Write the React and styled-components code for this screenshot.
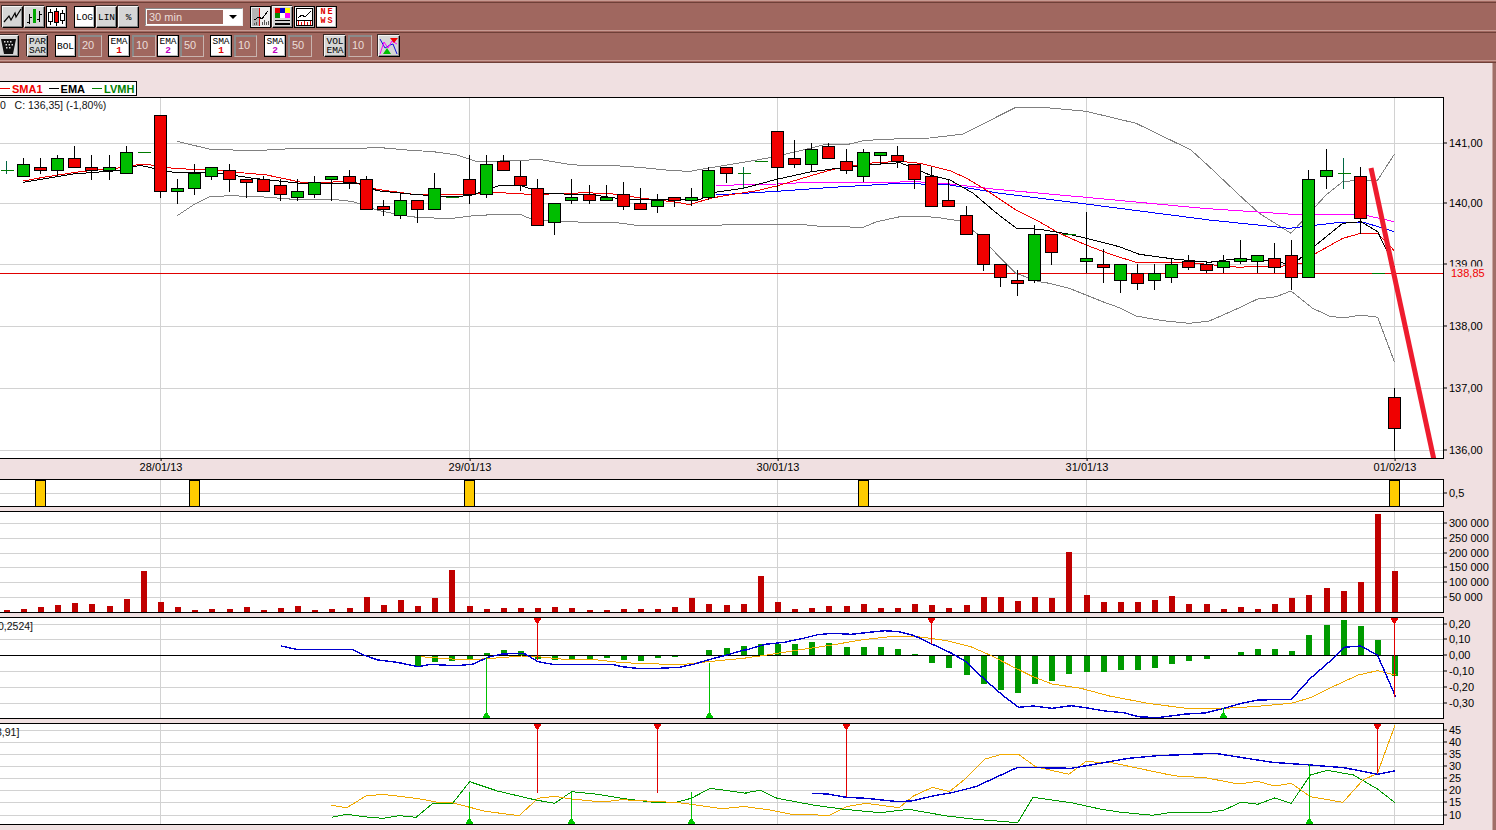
import React from "react";
import styled, { createGlobalStyle } from "styled-components";

const BROWN = "#a0675f";
const PINK = "#f0e0e1";
const GRID = "#d2d2d2";

const GlobalStyle = createGlobalStyle`
  html, body { margin: 0; padding: 0; background: ${PINK}; }
  body { font-family: "Liberation Sans", Arial, sans-serif; font-size: 11px; color: #000; }
`;

const Page = styled.div`
  width: 1496px;
  height: 830px;
  overflow: hidden;
  display: flex;
  flex-direction: column;
  background: ${PINK};
`;

/* toolbar */
const Toolbar = styled.header`
  flex: none;
  height: 63px;
  background: ${BROWN};
`;

const Stripe = styled.div`
  box-sizing: border-box;
  height: 3px;
  border-top: 1px solid #c79a92;
  border-bottom: 1px solid #6f4038;
`;

const ToolRow = styled.div`
  box-sizing: border-box;
  height: 27px;
  display: flex;
  align-items: flex-start;
  padding-top: ${(p) => p.$pad}px;
`;

const ToolButton = styled.div`
  box-sizing: border-box;
  flex: none;
  width: ${(p) => p.$w || 21}px;
  height: 22px;
  margin-left: ${(p) => p.$ml || 0}px;
  display: flex;
  flex-direction: column;
  align-items: center;
  justify-content: center;
  text-align: center;
  background: ${(p) => (p.$on ? "#fff" : "#d6d6d6")};
  border: 1px solid #000;
  border-top-color: ${(p) => (p.$on ? "#000" : "#f4f4f4")};
  border-left-color: ${(p) => (p.$on ? "#000" : "#f4f4f4")};
  box-shadow: ${(p) => (p.$on ? "inset -1px -1px 0 #bbb" : "inset -1px -1px 0 #888, -1px -1px 0 #3a2a28")};
  font: 9.5px/9px "Liberation Mono", "DejaVu Sans Mono", monospace;
  color: #000;
  svg { display: block; }
`;

const Num = styled.span`
  color: ${(p) => p.$c};
  font-weight: bold;
`;

const NewsText = styled.span`
  color: #e00000;
  font-weight: bold;
  letter-spacing: 2px;
  margin-right: -2px;
  font-size: 8.5px;
  line-height: 9px;
  text-align: center;
`;

const ValueBox = styled.div`
  box-sizing: border-box;
  flex: none;
  width: ${(p) => p.$w || 24}px;
  height: 22px;
  margin-left: ${(p) => p.$ml || 2}px;
  padding-left: 3px;
  background: ${BROWN};
  border: 1px solid #8a8a8a;
  border-right-color: #c9b3ae;
  border-bottom-color: #c9b3ae;
  box-shadow: inset 1px 1px 0 #8a8a8a;
  color: #eaddd8;
  font-size: 11px;
  line-height: 19px;
`;

const Select = styled.div`
  box-sizing: border-box;
  flex: none;
  width: 98px;
  height: 18px;
  margin: 2px 0 0 6px;
  display: flex;
  background: #fff;
  border: 1px solid #8a8a8a;
  border-right-color: #eee;
  border-bottom-color: #eee;
`;

const SelectValue = styled.div`
  flex: 1;
  margin: 1px 0 1px 1px;
  padding-left: 2px;
  background: ${BROWN};
  color: #eaddd8;
  font-size: 11px;
  line-height: 14px;
`;

const SelectArrow = styled.div`
  flex: none;
  width: 19px;
  display: flex;
  align-items: center;
  justify-content: center;
  &::after {
    content: "";
    border: 4px solid transparent;
    border-top: 4px solid #000;
    border-bottom: 0;
  }
`;

/* chart area */
const Body = styled.div`
  flex: 1;
  display: flex;
  min-height: 0;
`;

const Charts = styled.main`
  flex: 1;
  min-width: 0;
`;

const Edge = styled.div`
  flex: none;
  width: 3px;
  background: #a06f68;
  border-left: 1px solid #c9a6a1;
`;

const LegendRow = styled.div`
  height: 34px;
  display: flex;
  align-items: flex-start;
  padding-top: 18px;
  box-sizing: border-box;
`;

const Legend = styled.div`
  box-sizing: border-box;
  height: 15px;
  width: 138px;
  margin-left: -1px;
  display: flex;
  align-items: center;
  background: #fff;
  border: 1px solid #000;
`;

const LegendItem = styled.span`
  display: flex;
  align-items: center;
  gap: 2px;
  margin-left: ${(p) => p.$ml}px;
  color: ${(p) => p.$c};
  font-weight: bold;
  font-size: 11px;
  &::before {
    content: "";
    width: 10px;
    height: 1px;
    background: ${(p) => p.$c};
  }
`;

const PanelRow = styled.section`
  display: flex;
  height: ${(p) => p.$h}px;
  margin-top: ${(p) => p.$gap || 0}px;
`;

const Plot = styled.div`
  box-sizing: border-box;
  position: relative;
  flex: none;
  width: 1444px;
  height: 100%;
  background: #fff;
  border: 1px solid #000;
  border-left: 0;
  overflow: hidden;
  svg { display: block; }
`;

const PlotNote = styled.span`
  position: absolute;
  top: ${(p) => p.$top}px;
  left: ${(p) => p.$left}px;
  white-space: pre;
  font-size: 10.5px;
  line-height: 13px;
  color: #111;
`;

const Axis = styled.div`
  position: relative;
  flex: 1;
`;

const AxisLabel = styled.span`
  position: absolute;
  left: 5px;
  transform: translateY(-50%);
  white-space: nowrap;
  font-size: 11px;
  line-height: 13px;
  color: #000;
  &::before {
    content: "";
    position: absolute;
    left: -5px;
    top: 6px;
    width: 3px;
    height: 1px;
    background: #000;
  }
`;

const LastPrice = styled.span`
  position: absolute;
  left: 5px;
  transform: translateY(-50%);
  padding: 0 2px;
  background: ${PINK};
  color: #f00000;
  font-size: 11px;
  line-height: 13px;
`;

const DateRow = styled.div`
  position: relative;
  height: 20px;
`;

const DateLabel = styled.span`
  position: absolute;
  top: 2px;
  transform: translateX(-50%);
  font-size: 11px;
  line-height: 13px;
  &::before {
    content: "";
    position: absolute;
    left: 50%;
    top: -2px;
    width: 1px;
    height: 2px;
    background: #000;
  }
`;

/* market data, read off the chart in page pixels */
const barX = (i) => Math.round(5.75 + 17.14 * i);
const VERTICALS = [160, 469, 777, 1086, 1394];
const DATES = [[161, "28/01/13"], [470, "29/01/13"], [778, "30/01/13"], [1087, "31/01/13"], [1395, "01/02/13"]];

// type, body top, body bottom, wick top, wick bottom
const CANDLES = [
  ["d",170,170,161,174],["g",164,176,158,176],["r",167,170,158,174],["g",158,170,155,177],["r",158,167,146,167],
  ["r",167,170,155,180],["g",167,170,155,180],["g",152,173,146,173],["d",152,152,152,152],["r",115,191,115,198],
  ["g",188,191,179,204],["g",173,188,164,195],["g",167,176,167,180],["r",170,179,164,192],["r",179,182,179,198],
  ["r",179,191,176,191],["r",185,194,179,201],["g",191,197,179,201],["g",182,194,176,198],["g",176,179,176,201],
  ["r",176,182,170,189],["r",179,209,176,209],["r",206,209,200,216],["g",200,215,194,219],["r",200,209,200,223],
  ["g",188,209,173,209],["d",197,197,197,197],["r",179,194,155,204],["g",164,194,155,198],["r",161,170,155,170],
  ["r",176,185,161,191],["r",188,225,179,225],["g",203,222,203,235],["g",197,200,179,204],["r",194,200,185,204],
  ["g",197,200,185,200],["r",194,206,182,210],["r",203,209,188,209],["g",200,206,194,213],["r",197,200,197,207],
  ["g",197,200,188,206],["g",170,197,167,200],["r",167,173,167,183],["d",173,173,167,188],["d",161,161,161,161],
  ["r",131,167,131,191],["r",158,164,140,168],["g",149,164,143,171],["r",146,158,143,158],["r",161,170,149,174],
  ["g",152,176,149,182],["g",152,155,152,164],["r",155,161,146,168],["r",164,179,164,189],["r",176,206,167,206],
  ["r",200,206,179,206],["r",215,234,206,234],["r",234,264,234,271],["r",264,277,264,287],["r",280,283,270,296],
  ["g",234,280,225,283],["r",234,252,234,265],["d",234,234,234,234],["g",258,261,212,273],["r",264,267,249,283],
  ["g",264,280,264,293],["r",273,283,264,290],["g",273,280,264,290],["g",264,277,258,283],["r",261,267,255,270],
  ["r",264,270,261,273],["g",261,267,255,273],["g",258,261,240,264],["g",255,261,255,273],["r",258,267,243,273],
  ["r",255,277,240,290],["g",179,277,170,277],["g",170,176,149,189],["d",173,173,158,189],["r",176,218,167,234],
  ["d",273,273,273,273],["r",397,428,388,451],
];

const VOLUMES = [
  2,3,5,7,9,8,6,13,41,10,5,2,3,3,5,2,4,6,2,3,4,15,7,12,6,14,42,6,3,4,4,4,5,4,2,2,3,3,3,5,14,8,7,8,36,10,3,4,6,6,8,
  4,4,8,7,4,7,15,15,11,15,14,60,17,10,10,10,12,16,8,8,3,5,3,8,14,17,24,21,30,98,41,
];

// histogram height from the zero line: plus goes up, minus goes down; starts at bar 24
const HISTOGRAM = [
  -10,-6,-5,-4,2,5,4,-3,-4,-4,-4,-2,-4,-5,-2,-1,0,5,7,9,11,11,11,13,12,8,8,8,6,1,-7,-12,-19,-28,-34,-37,-28,-25,-18,-16,
  -16,-14,-14,-12,-8,-5,-3,0,3,6,6,4,20,30,35,29,15,-20,
];

// traced traces: coordinates of 3x crops, turned into page pixels here
const tr = (pts, ox, oy, sx = 3, sy = 3) => pts.map(([x, y]) => [ox + x / sx, oy + y / sy]);
const toPoints = (...parts) => parts.flat().map(([x, y]) => `${x.toFixed(1)},${y.toFixed(1)}`).join(" ");
const WIDE = 1568 / 750;

const BOLL_UP = toPoints(
  tr([[532,124],[630,148],[765,152],[870,146],[970,147],[1075,146],[1130,142],[1220,150],[1300,155],[1370,165],[1430,185],[1500,183]], 0, 100),
  tr([[60,182],[115,178],[200,192],[240,196],[330,196],[430,203],[520,212],[570,214],[620,205],[700,192],[760,182],[830,169],[930,145],[970,135],[1040,134],[1090,122],[1150,118],[1290,114],[1390,102],[1450,72],[1488,52]], 500, 100),
  tr([[60,22],[140,22],[270,34],[420,70],[585,150],[640,200],[740,295],[790,340],[885,400],[940,340],[990,285],[1040,245],[1095,240],[1145,240],[1195,163]], 996, 100),
);
const BOLL_DOWN = toPoints(
  tr([[532,347],[580,315],[630,290],[690,287],[780,290],[880,298],[1000,298],[1060,305],[1130,330],[1200,345],[1250,352],[1350,356],[1420,347],[1500,343]], 0, 100),
  tr([[60,343],[100,360],[180,365],[350,368],[410,376],[650,376],[700,373],[900,373],[960,379],[1090,382],[1130,365],[1200,350],[1250,349],[1310,352],[1380,363],[1430,400],[1488,460]], 500, 100),
  tr([[60,520],[130,545]], 996, 100),
  tr([[160,70],[220,85],[320,125],[375,145],[420,168],[500,182],[580,190],[640,183],[720,148],[785,117],[840,110],[885,93],[950,145],[1000,168],[1040,174],[1095,165],[1145,172],[1195,305]], 996, 260),
);
const SMA_RED = toPoints(
  tr([[70,243],[130,232],[240,215],[350,205],[420,193],[440,193],[500,203],[570,208],[610,207],[700,216],[800,225],[900,246],[1000,246],[1060,245],[1090,257],[1130,268],[1240,283],[1340,285],[1500,278]], 0, 100),
  tr([[90,283],[150,282],[260,278],[340,282],[430,295],[530,307],[570,314],[630,295],[700,283],[770,272],[830,258],[930,228],[1000,208],[1100,190],[1200,184],[1260,190],[1350,212],[1400,235],[1450,265],[1488,290]], 500, 100),
  tr([[60,330],[130,365],[190,400],[270,435],[350,465],[420,487],[490,487],[600,490],[730,502],[790,498],[860,498],[920,490],[960,460],[1040,415],[1095,400],[1145,400],[1195,452]], 996, 100),
);
const EMA_BLACK = toPoints(
  tr([[70,247],[220,222],[350,212],[420,196],[460,205],[530,219],[640,217],[760,235],[900,250],[1090,250],[1130,272],[1240,283],[1340,290],[1410,287],[1500,256]], 0, 100),
  tr([[60,256],[130,280],[280,285],[390,300],[600,298],[650,276],[730,265],[830,238],[930,216],[990,208],[1100,195],[1200,188],[1290,225],[1350,240],[1420,280],[1488,338]], 500, 100),
  tr([[60,384],[130,388],[220,403],[270,415],[370,440],[430,463],[540,478],[640,487],[730,475],[830,484],[890,494],[960,435],[1040,370],[1095,365],[1145,395],[1195,500]], 996, 100),
);
const LONG_PINK = toPoints(
  tr([[648,256],[760,254],[830,252],[930,247],[1150,247],[1250,245],[1350,252],[1488,268]], 500, 100),
  tr([[270,292],[620,325],[890,343],[1095,343],[1195,365]], 996, 100),
);
const LONG_BLUE = toPoints(
  tr([[648,285],[830,274],[1000,262],[1200,250],[1350,255],[1488,278]], 500, 100),
  tr([[270,312],[640,360],[880,385],[1040,366],[1100,366],[1195,395]], 996, 100),
);

const MACD_BLUE = toPoints(
  tr([[588,108],[600,112],[620,118],[735,118],[760,135],[790,150],[830,157],[875,170],[900,163],[935,166],[965,166],[990,162],[1020,142],[1050,132],[1095,130],[1125,155],[1155,163],[1280,163],[1300,170],[1340,176],[1360,176],[1420,172],[1450,163],[1485,148],[1520,135],[1560,118]], 0, 610, WIDE),
  tr([[0,120],[40,103],[80,97],[120,85],[150,74],[180,70],[220,73],[250,68],[290,62],[320,65],[350,76],[390,103],[430,130],[460,155],[500,210],[540,260],[570,292],[600,288],[640,295],[680,287],[710,293],[750,303],[790,308],[820,320],[860,323],[920,312],[960,309],[1000,295],[1030,282],[1070,270],[1140,268],[1180,205],[1220,155],[1250,112],[1285,108],[1320,135],[1340,200],[1358,260]], 746, 610, WIDE),
);
const MACD_ORANGE = toPoints(
  tr([[880,140],[925,145],[975,150],[1030,145],[1090,138],[1125,140],[1180,148],[1250,150],[1300,158],[1395,163],[1430,163],[1480,155],[1560,144]], 0, 610, WIDE),
  tr([[0,143],[30,138],[100,122],[180,105],[240,90],[300,80],[360,80],[420,92],[470,110],[510,135],[560,172],[600,200],[640,222],[700,235],[760,258],[840,280],[920,295],[1000,295],[1060,290],[1140,280],[1180,263],[1230,228],[1280,195],[1320,182],[1358,195]], 746, 610, WIDE),
);
const ADX_GREEN = toPoints(
  tr([[693,622],[725,613],[760,620],[800,625],[835,617],[870,622],[905,580],[945,582],[982,515],[1040,543],[1120,570],[1160,580],[1195,545],[1250,553],[1300,565],[1365,577],[1410,578],[1445,565],[1485,535],[1560,550]], 0, 610, WIDE),
  tr([[0,548],[30,541],[65,565],[140,585],[200,597],[280,608],[340,598],[420,618],[480,628],[568,638],[600,562],[680,578],[740,597],[780,606],[850,616],[890,607],[970,607],[1000,600],[1035,576],[1070,583],[1105,564],[1140,580],[1180,495],[1215,481],[1270,495],[1320,537],[1357,578]], 746, 610, WIDE),
);
const ADX_ORANGE = toPoints(
  tr([[693,586],[725,593],[765,558],[800,553],[875,566],[920,578],[945,578],[982,592],[1015,604],[1085,617],[1125,565],[1160,559],[1195,567],[1260,576],[1300,569],[1340,572],[1420,578],[1480,590],[1510,596],[1560,589]], 0, 610, WIDE),
  tr([[0,590],[50,600],[95,613],[175,616],[210,590],[250,580],[320,593],[350,558],[390,532],[425,545],[460,505],[500,447],[535,433],[570,433],[605,470],[675,493],[710,455],[765,458],[880,493],[900,498],[960,503],[1030,522],[1070,514],[1105,528],[1140,520],[1180,560],[1248,577],[1290,510],[1320,490],[1357,345]], 746, 610, WIDE),
);
const ADX_BLUE = toPoints(
  tr([[138,550],[170,552],[210,562],[250,565],[320,575],[350,572],[390,558],[430,548],[480,530],[568,472],[680,475],[720,465],[800,445],[860,437],[980,430],[1100,457],[1180,465],[1250,473],[1320,493],[1357,482]], 746, 610, WIDE),
);

const PRICE_TICKS = [[143, "141,00"], [203, "140,00"], [264, "139,00"], [326, "138,00"], [388, "137,00"], [450, "136,00"]];
const VOLUME_TICKS = [[523, "300 000"], [538, "250 000"], [553, "200 000"], [567, "150 000"], [582, "100 000"], [597, "50 000"]];
const MACD_TICKS = [[624, "0,20"], [639, "0,10"], [655, "0,00"], [671, "-0,10"], [687, "-0,20"], [703, "-0,30"]];
const ADX_TICKS = [[730, "45"], [742, "40"], [754, "35"], [766, "30"], [778, "25"], [790, "20"], [802, "15"], [815, "10"]];

/* svg parts */
const Chart = ({ top, bottom, children }) => (
  <svg width="1443" height={bottom - top - 1} viewBox={`0 ${top + 1} 1443 ${bottom - top - 1}`}>
    {children}
  </svg>
);

const Grid = ({ rows }) => (
  <g stroke={GRID} shapeRendering="crispEdges">
    {rows.map(([y]) => <line key={y} x1="0" x2="1443" y1={y + 0.5} y2={y + 0.5} />)}
    {VERTICALS.map((x) => <line key={x} x1={x + 0.5} x2={x + 0.5} y1="90" y2="830" />)}
  </g>
);

const Trace = ({ points, color, width = 1 }) => (
  <polyline points={points} fill="none" stroke={color} strokeWidth={width} shapeRendering="crispEdges" />
);

const Candle = ({ x, kind, top, bottom, wickTop, wickBottom }) => {
  const cx = x + 0.5;
  if (kind === "d") {
    return (
      <g shapeRendering="crispEdges">
        {wickTop !== wickBottom && <line x1={cx} x2={cx} y1={wickTop} y2={wickBottom} stroke="#064" />}
        <line x1={cx - 6} x2={cx + 7} y1={top + 0.5} y2={top + 0.5} stroke="#007a00" />
      </g>
    );
  }
  return (
    <g shapeRendering="crispEdges">
      <line x1={cx} x2={cx} y1={wickTop} y2={wickBottom} stroke="#000" />
      <rect x={cx - 6} y={top + 0.5} width="12" height={bottom - top} fill={kind === "g" ? "#00bd00" : "#f00000"} stroke="#000" />
    </g>
  );
};

const SellSignal = ({ x, top, end }) => (
  <g shapeRendering="crispEdges" fill="#e80000">
    <line x1={x + 0.5} x2={x + 0.5} y1={top} y2={end} stroke="#e00000" />
    <polygon points={`${x - 3.5},${top + 1} ${x + 4.5},${top + 1} ${x + 0.5},${top + 8}`} />
  </g>
);

const BuySignal = ({ x, bottom, start }) => (
  <g shapeRendering="crispEdges" fill="#00c800">
    <line x1={x + 0.5} x2={x + 0.5} y1={start} y2={bottom} stroke="#00c000" />
    <polygon points={`${x - 3.5},${bottom} ${x + 4.5},${bottom} ${x + 0.5},${bottom - 7}`} />
  </g>
);

/* toolbar drawings */
const IconLine = () => (
  <svg width="19" height="20" viewBox="0 0 19 20">
    <polyline points="1,15 6,9 8,13 12,6 13,10 18,2" fill="none" stroke="#000" strokeWidth="1.2" />
  </svg>
);

const IconBars = () => (
  <svg width="19" height="20" viewBox="0 0 19 20" shapeRendering="crispEdges">
    <path d="M4.5 7v10M2 15h2.5M4.5 10H7M14.5 4v11M12 12h2.5M14.5 7H17" stroke="#000" fill="none" />
    <rect x="8" y="2" width="3" height="14" fill="#00a800" />
  </svg>
);

const IconCandles = () => (
  <svg width="19" height="20" viewBox="0 0 19 20" shapeRendering="crispEdges">
    <path d="M3.5 2v16M9.5 1v18M15.5 3v14" stroke="#000" />
    <rect x="1.5" y="5.5" width="4" height="9" fill="#fff" stroke="#000" />
    <rect x="7.5" y="4.5" width="4" height="11" fill="#f00000" stroke="#000" />
    <rect x="13.5" y="6.5" width="4" height="7" fill="#fff" stroke="#000" />
  </svg>
);

const IconTrash = () => (
  <svg width="19" height="20" viewBox="0 0 19 20">
    <polygon points="2,3 17,3 14,18 5,18" fill="#111" />
    <g fill="#ddd">
      <rect x="5" y="5" width="1.5" height="1.5" /><rect x="8" y="5" width="1.5" height="1.5" /><rect x="11" y="5" width="1.5" height="1.5" />
      <rect x="6.5" y="8" width="1.5" height="1.5" /><rect x="9.5" y="8" width="1.5" height="1.5" /><rect x="12.5" y="8" width="1.5" height="1.5" />
      <rect x="7" y="11" width="1.5" height="1.5" /><rect x="10" y="11" width="1.5" height="1.5" />
    </g>
  </svg>
);

const IconCursor = () => (
  <svg width="19" height="20" viewBox="0 0 19 20" shapeRendering="crispEdges">
    <rect x="0" y="0" width="19" height="20" fill="#eee" />
    <rect x="1" y="1" width="7" height="18" fill="#b4b4b4" />
    <rect x="8" y="1" width="1" height="18" fill="#e00000" />
    <polyline points="3,13 8,10 11,12 17,4" fill="none" stroke="#000" />
    <path d="M11 18v-3M13 18v-5M15 18v-3M17 18v-4M3 18v-2M5 18v-3" stroke="#555" />
  </svg>
);

const IconPalette = () => (
  <svg width="19" height="20" viewBox="0 0 19 20" shapeRendering="crispEdges">
    <rect x="2" y="1" width="5" height="5" fill="#e00000" />
    <rect x="7" y="1" width="5" height="5" fill="#0000d0" />
    <rect x="12" y="1" width="5" height="5" fill="#ffff00" />
    <rect x="2" y="6" width="5" height="5" fill="#008a00" />
    <rect x="7" y="6" width="5" height="5" fill="#fff" />
    <rect x="12" y="6" width="5" height="5" fill="#ff00ff" />
    <rect x="2" y="13" width="15" height="1" fill="#000" />
    <rect x="2" y="16" width="15" height="2" fill="#000" />
  </svg>
);

const IconPreview = () => (
  <svg width="19" height="20" viewBox="0 0 19 20" shapeRendering="crispEdges">
    <rect x="1.5" y="1.5" width="16" height="17" fill="#fff" stroke="#000" />
    <polyline points="3,11 7,8 10,10 16,4" fill="none" stroke="#000" />
    <path d="M3.5 18v-4M6.5 18v-3M9.5 18v-5M12.5 18v-3M15.5 18v-4" stroke="#e00000" />
    <line x1="2" x2="17" y1="13" y2="13" stroke="#000" />
  </svg>
);

const IconSignals = () => (
  <svg width="20" height="20" viewBox="0 0 20 20">
    <polyline points="1,3 6,12 11,9 14,8 18,18" fill="none" stroke="#1010e0" />
    <polyline points="1,18 5,6 9,12 13,5 18,8" fill="none" stroke="#ff00ff" />
    <polygon points="11,2 19,2 15,7" fill="#f00000" />
    <polygon points="4,18 12,18 8,12" fill="#00c000" />
  </svg>
);

export default function App() {
  return (
    <Page>
      <GlobalStyle />
      <Toolbar>
        <Stripe />
        <ToolRow $pad={3}>
          <ToolButton $ml={2}><IconLine /></ToolButton>
          <ToolButton $ml={1}><IconBars /></ToolButton>
          <ToolButton $ml={1} $on><IconCandles /></ToolButton>
          <ToolButton $ml={7} $on>LOG</ToolButton>
          <ToolButton $ml={1}>LIN</ToolButton>
          <ToolButton $ml={1}>%</ToolButton>
          <Select>
            <SelectValue>30 min</SelectValue>
            <SelectArrow />
          </Select>
          <ToolButton $ml={7} $on><IconCursor /></ToolButton>
          <ToolButton $ml={1}><IconPalette /></ToolButton>
          <ToolButton $ml={1} $on><IconPreview /></ToolButton>
          <ToolButton $ml={1} $on><NewsText>NE<br />WS</NewsText></ToolButton>
        </ToolRow>
        <Stripe />
        <ToolRow $pad={2}>
          <ToolButton $ml={-2}><IconTrash /></ToolButton>
          <ToolButton $ml={8}>PAR<br />SAR</ToolButton>
          <ToolButton $ml={7} $on>BOL</ToolButton>
          <ValueBox>20</ValueBox>
          <ToolButton $ml={6} $w={22} $on>EMA<Num $c="#e00000">1</Num></ToolButton>
          <ValueBox>10</ValueBox>
          <ToolButton $ml={1} $w={22} $on>EMA<Num $c="#c000c0">2</Num></ToolButton>
          <ValueBox $ml={1}>50</ValueBox>
          <ToolButton $ml={6} $w={22} $on>SMA<Num $c="#e00000">1</Num></ToolButton>
          <ValueBox $w={23}>10</ValueBox>
          <ToolButton $ml={7} $w={22} $on>SMA<Num $c="#c000c0">2</Num></ToolButton>
          <ValueBox>50</ValueBox>
          <ToolButton $ml={12} $w={22}>VOL<br />EMA</ToolButton>
          <ValueBox>10</ValueBox>
          <ToolButton $ml={6} $w={22}><IconSignals /></ToolButton>
        </ToolRow>
        <Stripe />
      </Toolbar>

      <Body>
        <Charts>
          <LegendRow>
            <Legend>
              <LegendItem $ml={0} $c="#f00000">SMA1</LegendItem>
              <LegendItem $ml={6} $c="#000">EMA</LegendItem>
              <LegendItem $ml={7} $c="#008000">LVMH</LegendItem>
            </Legend>
          </LegendRow>

          <PanelRow $h={362}>
            <Plot>
              <Chart top={97} bottom={458}>
                <Grid rows={PRICE_TICKS} />
                <line x1="0" x2="1443" y1="273.5" y2="273.5" stroke="#e00000" shapeRendering="crispEdges" />
                <Trace points={BOLL_UP} color="#808080" />
                <Trace points={BOLL_DOWN} color="#808080" />
                <Trace points={LONG_PINK} color="#ff00ff" />
                <Trace points={LONG_BLUE} color="#0000ff" />
                <Trace points={SMA_RED} color="#f00000" />
                <Trace points={EMA_BLACK} color="#000" />
                {CANDLES.map(([kind, top, bottom, wickTop, wickBottom], i) => (
                  <Candle key={i} x={barX(i)} kind={kind} top={top} bottom={bottom} wickTop={wickTop} wickBottom={wickBottom} />
                ))}
                <line x1="1371" y1="168" x2="1434" y2="460" stroke="#ee1c2e" strokeWidth="5" />
              </Chart>
              <PlotNote $top={1} $left={0}>{"0   C: 136,35] (-1,80%)"}</PlotNote>
            </Plot>
            <Axis>
              {PRICE_TICKS.map(([y, label]) => (
                <AxisLabel key={label} style={{ top: y - 97 }}>{label}</AxisLabel>
              ))}
              <LastPrice style={{ top: 273 - 97 }}>138,85</LastPrice>
            </Axis>
          </PanelRow>

          <DateRow>
            {DATES.map(([x, label]) => (
              <DateLabel key={label} style={{ left: x }}>{label}</DateLabel>
            ))}
          </DateRow>

          <PanelRow $h={28}>
            <Plot>
              <Chart top={479} bottom={506}>
                <Grid rows={[[493]]} />
                {[40, 194, 469, 863, 1394].map((x) => (
                  <rect key={x} x={x - 4.5} y="480.5" width="10" height="27" fill="#ffcc00" stroke="#000" shapeRendering="crispEdges" />
                ))}
              </Chart>
            </Plot>
            <Axis>
              <AxisLabel style={{ top: 14 }}>0,5</AxisLabel>
            </Axis>
          </PanelRow>

          <PanelRow $h={102} $gap={4}>
            <Plot>
              <Chart top={511} bottom={612}>
                <Grid rows={VOLUME_TICKS} />
                {VOLUMES.map((h, i) => (
                  <rect key={i} x={barX(i) - 2} y={612 - h} width="6" height={h} fill="#c00000" shapeRendering="crispEdges" />
                ))}
              </Chart>
            </Plot>
            <Axis>
              {VOLUME_TICKS.map(([y, label]) => (
                <AxisLabel key={label} style={{ top: y - 511 }}>{label}</AxisLabel>
              ))}
            </Axis>
          </PanelRow>

          <PanelRow $h={102} $gap={4}>
            <Plot>
              <Chart top={617} bottom={718}>
                <Grid rows={MACD_TICKS} />
                {HISTOGRAM.map((h, i) => (
                  <rect
                    key={i}
                    x={barX(i + 24) - 2}
                    y={h > 0 ? 655 - h : 656}
                    width="6"
                    height={Math.abs(h)}
                    fill="#009a00"
                    shapeRendering="crispEdges"
                  />
                ))}
                <line x1="0" x2="1443" y1="655.5" y2="655.5" stroke="#000" shapeRendering="crispEdges" />
                <Trace points={MACD_ORANGE} color="#f0a800" />
                <Trace points={MACD_BLUE} color="#0000d0" width={1.4} />
                <SellSignal x={537} top={617} end={660} />
                <SellSignal x={931} top={617} end={644} />
                <SellSignal x={1394} top={617} end={697} />
                <BuySignal x={486} bottom={718} start={657} />
                <BuySignal x={709} bottom={718} start={663} />
                <BuySignal x={1223} bottom={718} start={708} />
              </Chart>
              <PlotNote $top={2} $left={-2}>0,2524]</PlotNote>
            </Plot>
            <Axis>
              {MACD_TICKS.map(([y, label]) => (
                <AxisLabel key={label} style={{ top: y - 617 }}>{label}</AxisLabel>
              ))}
            </Axis>
          </PanelRow>

          <PanelRow $h={102} $gap={4}>
            <Plot>
              <Chart top={723} bottom={824}>
                <Grid rows={ADX_TICKS} />
                <Trace points={ADX_GREEN} color="#009a00" />
                <Trace points={ADX_ORANGE} color="#f0a800" />
                <Trace points={ADX_BLUE} color="#0000d0" width={1.4} />
                <SellSignal x={537} top={723} end={793} />
                <SellSignal x={657} top={723} end={793} />
                <SellSignal x={846} top={723} end={797} />
                <SellSignal x={1377} top={723} end={773} />
                <BuySignal x={469} bottom={824} start={792} />
                <BuySignal x={571} bottom={824} start={792} />
                <BuySignal x={691} bottom={824} start={792} />
                <BuySignal x={1309} bottom={824} start={764} />
              </Chart>
              <PlotNote $top={2} $left={-4}>3,91]</PlotNote>
            </Plot>
            <Axis>
              {ADX_TICKS.map(([y, label]) => (
                <AxisLabel key={label} style={{ top: y - 723 }}>{label}</AxisLabel>
              ))}
            </Axis>
          </PanelRow>
        </Charts>
        <Edge />
      </Body>
    </Page>
  );
}
